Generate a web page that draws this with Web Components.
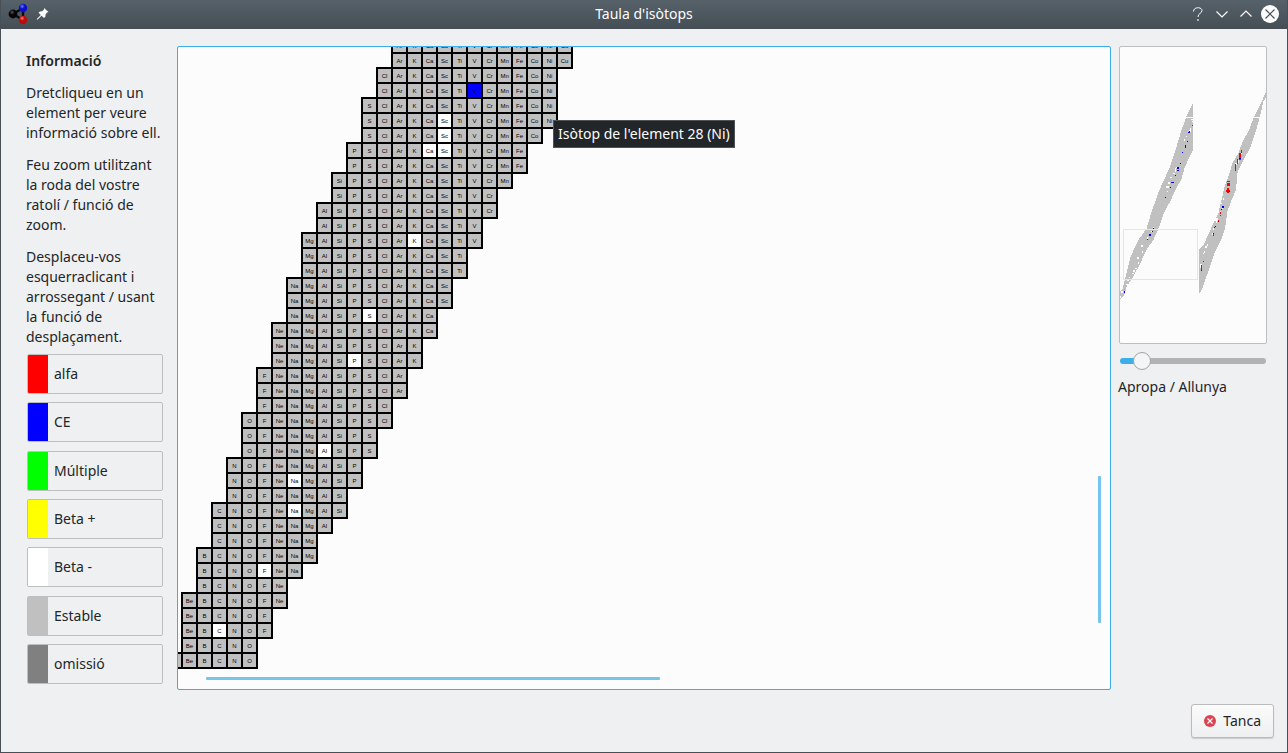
<!DOCTYPE html>
<html lang="ca">
<head>
<meta charset="utf-8">
<title>Taula d'isòtops</title>
<style>
  html, body { margin: 0; height: 100%; }
  body { font: 14px/20px "Noto Sans", sans-serif; color: #232629; background: #eff0f1; }
</style>
</head>
<body>
<isotope-window></isotope-window>

<template id="title-bar">
  <style>
    :host { display: grid; grid-template-columns: 1fr auto 1fr; align-items: center; height: 29px; box-sizing: border-box;
      padding: 0 7px 1px; background: linear-gradient(#566169, #454e55); color: #fcfcfc; }
    h1 { font: inherit; margin: 0; }
    .left, .right { display: flex; align-items: center; }
    .left { gap: 8px; }
    .right { justify-content: flex-end; gap: 4px; }
    button { all: unset; display: flex; width: 20px; height: 20px; }
    svg { display: block; }
  </style>
  <div class="left">
    <svg width="20" height="22" viewBox="0 0 20 22" aria-hidden="true">
      <defs>
        <radialGradient id="k" cx=".4" cy=".3"><stop offset="0" stop-color="#555"/><stop offset=".6" stop-color="#050505"/></radialGradient>
        <radialGradient id="b" cx=".4" cy=".3"><stop offset="0" stop-color="#7480ff"/><stop offset=".6" stop-color="#0a10c8"/></radialGradient>
        <radialGradient id="r" cx=".4" cy=".3"><stop offset="0" stop-color="#ff7b70"/><stop offset=".6" stop-color="#c00a0a"/></radialGradient>
      </defs>
      <path d="M5 11 15 5V17Z" fill="none" stroke="#0a0a0a" stroke-width="2.4"/>
      <circle cx="5" cy="11" r="4.4" fill="url(#k)"/>
      <circle cx="15" cy="5" r="4.2" fill="url(#b)"/>
      <circle cx="15" cy="17" r="4.2" fill="url(#r)"/>
    </svg>
    <button aria-label="Fixa"><svg width="14" height="20" viewBox="0 0 14 20"><path d="M8 4 12.500 8 11 8.500 9.500 10.500 9.500 12.500 8 14 5.500 11.800 1.500 15.800 .8 15 4.800 11 2.500 8.700 4 7.500 6.200 7.300 8 5.500Z" fill="#fcfcfc"/></svg></button>
  </div>
  <h1>Taula d'isòtops</h1>
  <div class="right">
    <button aria-label="Ajuda"><svg width="20" height="20" viewBox="0 0 20 20" fill="none" stroke="#fcfcfc"><path d="M5.500 7.500C5.500 2.500 14 2.800 14 6.500 14 9.500 10 9.200 10 13"/><path d="M10 15v2" stroke-width="1.600" opacity=".7"/></svg></button>
    <button aria-label="Minimitza"><svg width="20" height="20" viewBox="0 0 20 20" fill="none" stroke="#fcfcfc" stroke-width="1.200"><path d="M4.500 7.500 10 13 15.500 7.500"/></svg></button>
    <button aria-label="Maximitza"><svg width="20" height="20" viewBox="0 0 20 20" fill="none" stroke="#fcfcfc" stroke-width="1.200"><path d="M4.500 12.500 10 7 15.500 12.500"/></svg></button>
    <button aria-label="Tanca la finestra"><svg width="20" height="20" viewBox="0 0 20 20"><circle cx="10" cy="10" r="9" fill="#fcfcfc"/><path d="M5.500 5.500l9 9m0-9l-9 9" stroke="#475057" stroke-width="1.200"/></svg></button>
  </div>
</template>

<template id="info-panel">
  <style>
    :host { display: flex; flex-direction: column; box-sizing: border-box; padding: 5px 0 6px; }
    h2 { font: inherit; font-weight: 600; margin: 0; }
    p { margin: 12px 0 0; }
    ul { list-style: none; margin: 7px 0 0 1px; padding: 0; flex: 1; display: flex; flex-direction: column; justify-content: space-between; }
  </style>
  <h2>Informació</h2>
  <p>Dretcliqueu en un element per veure informació sobre ell.</p>
  <p>Feu zoom utilitzant la roda del vostre ratolí / funció de zoom.</p>
  <p>Desplaceu-vos esquerraclicant i arrossegant / usant la funció de desplaçament.</p>
  <ul>
    <li><legend-entry style="--swatch:#f00">alfa</legend-entry></li>
    <li><legend-entry style="--swatch:#00f">CE</legend-entry></li>
    <li><legend-entry style="--swatch:#0f0">Múltiple</legend-entry></li>
    <li><legend-entry style="--swatch:#ff0">Beta +</legend-entry></li>
    <li><legend-entry style="--swatch:#fff">Beta -</legend-entry></li>
    <li><legend-entry style="--swatch:#c0c0c0">Estable</legend-entry></li>
    <li><legend-entry style="--swatch:#808080">omissió</legend-entry></li>
  </ul>
</template>

<template id="legend-entry">
  <style>
    :host { display: flex; align-items: center; gap: 6px; height: 40px; box-sizing: border-box; border: 1px solid #bcbebf; border-radius: 2px; overflow: hidden; }
    i { align-self: stretch; width: 20px; background: var(--swatch); }
  </style>
  <i></i><span><slot></slot></span>
</template>

<template id="isotope-chart">
  <style>
    :host { display: block; position: relative; box-sizing: border-box; min-height: 644px; border: 1px solid #3daee9; border-radius: 2px; background: #fcfcfc; }
    .view { position: absolute; inset: 0; overflow: hidden; }
    table { border-collapse: collapse; table-layout: fixed; width: 407px; margin: -10px 0 0 -12px; font: 6px/11px "Liberation Sans", sans-serif; color: #000; text-align: center; }
    col { width: 15px; }
    tr { height: 15px; }
    td { padding: 0; white-space: nowrap; }
    .cell { padding-top: 2px; border: 2px solid #000; background: #c0c0c0; }
    .cell.beta { background: #fff; }
    .cell.ce { background: #00f; }
    .bar { position: absolute; background: #77c4ec; border-radius: 1px; }
    .v { width: 3px; right: 9px; bottom: 66px; height: 147px; }
    .h { height: 3px; bottom: 9px; left: 3%; width: 454px; }
    .tip { position: absolute; left: 375px; top: 73px; padding: 3px 4px; border: 1px solid #4d5356; background: #232629; color: #fcfcfc; white-space: nowrap; }
  </style>
  <div class="view"><table aria-label="Isòtops"></table></div>
  <div class="bar v"></div><div class="bar h"></div>
  <div class="tip" role="tooltip">Isòtop de l'element 28 (Ni)</div>
</template>

<template id="chart-navigator">
  <style>
    :host { display: flex; flex-direction: column; }
    .map { box-sizing: border-box; border: 1px solid #bcbebf; border-radius: 2px; background: #fcfcfc; overflow: hidden; }
    svg { display: block; width: 100%; }
    input { appearance: none; -webkit-appearance: none; display: block; width: auto; margin: 8px 1px 7px; height: 18px; background: none; }
    input::-webkit-slider-runnable-track { height: 6px; border-radius: 3px; background: linear-gradient(to right, #3daee9 15%, #b1b3b4 15%); }
    input::-webkit-slider-thumb { -webkit-appearance: none; box-sizing: border-box; width: 18px; height: 18px; margin-top: -6px; border: 1px solid #a2a4a6; border-radius: 50%; background: #f4f5f5; }
    label { margin-left: -1px; white-space: nowrap; }
  </style>
  <div class="map">
    <svg viewBox="0 0 438 888" shape-rendering="crispEdges" role="img" aria-label="Mapa">
      <g fill="#c0c0c0">
        <path d="M217 171 199 209 183 254 165 314 150 359 130 404 118 429 95 494 80 544 55 579 32 629 18 684 8 724 0 734 0 757 12 747 20 719 35 697 60 651 80 607 100 579 120 534 130 501 150 464 167 429 185 394 195 359 219 309 219 171Z"/>
        <path d="M438 136 422 169 402 209 385 254 370 279 355 319 337 349 327 384 315 414 307 449 295 499 282 524 267 559 250 594 238 607 238 739 245 729 270 659 285 614 303 579 315 544 322 494 335 459 348 429 353 374 370 339 390 304 410 244 420 209 430 164 438 152Z"/>
      </g>
      <g id="dots"></g>
      <rect x="11" y="548" width="222" height="150" fill="none" stroke="#f5dedd" stroke-width="3"/>
    </svg>
  </div>
  <input type="range" id="zoom" min="0" max="100" value="10">
  <label for="zoom">Apropa / Allunya</label>
</template>

<template id="isotope-window">
  <style>
    :host { display: flex; flex-direction: column; min-height: 100vh; box-sizing: border-box; border: solid #475057; border-width: 0 1px 1px; background: #eff0f1; }
    main { flex: 1; display: grid; grid-template-columns: 137px 1fr 148px; padding: 17px 20px 0 25px; }
    isotope-chart { margin: 0 8px 0 14px; }
    footer { display: flex; justify-content: flex-end; padding: 14px 13px 14px; }
    button { display: flex; align-items: center; gap: 6px; height: 34px; box-sizing: border-box; margin: 0; padding: 0 12px 0 11px; font: inherit; color: inherit;
      border: 1px solid #b9bbbd; border-radius: 3px; background: linear-gradient(#fbfbfb, #eeeff0); box-shadow: 0 1px 1px #c9cbcc; }
  </style>
  <title-bar></title-bar>
  <main><info-panel></info-panel><isotope-chart></isotope-chart><chart-navigator></chart-navigator></main>
  <footer><button><svg width="14" height="14" viewBox="0 0 14 14" aria-hidden="true"><circle cx="7" cy="7" r="6" fill="#da4453"/><path d="M4.500 4.500l5 5m0-5l-5 5" stroke="#fff" stroke-width="1.200"/></svg>Tanca</button></footer>
</template>

<script>
const SYMBOLS = ['', 'Be', 'B', 'C', 'N', 'O', 'F', 'Ne', 'Na', 'Mg', 'Al', 'Si', 'P', 'S', 'Cl', 'Ar', 'K', 'Ca', 'Sc', 'Ti', 'V', 'Cr', 'Mn', 'Fe', 'Co', 'Ni', 'Cu'];
const FIRST = 3;
// Each row: first atomic number, last atomic number, then the decays of single cells.
const ROWS = [[18,29],[18,29],[17,28],[17,28,{23:'ce'}],[16,28],[16,28,{21:'beta'}],[16,27,{21:'beta'}],[15,26,{20:'beta',21:'beta'}],
  [15,26],[14,25],[14,24],[13,24],[13,23],[12,23,{19:'beta'}],[12,22],[12,22],[11,21],[11,21],[11,20,{16:'beta'}],[10,20],[10,19],
  [10,19,{15:'beta'}],[9,18],[9,18],[9,17],[8,17],[8,16],[8,16,{13:'beta'}],[7,15],[7,15,{11:'beta'}],[7,14],[6,14,{11:'beta'}],
  [6,13],[6,12],[5,12],[5,11,{9:'beta'}],[5,10],[4,10],[4,9],[4,9,{6:'beta'}],[4,8],[3,8]];
// Overview marks: x, y, width, height.
const DOTS = {
  '#fcfcfc': [[196,210,26,3],[400,210,22,3],[213,215,6,3],[216,222,3,3],[210,243,3,12],[207,249,3,9],[198,267,3,3],[192,276,3,6],[168,359,9,3],[165,363,3,12],
    [160,378,6,3],[150,390,6,3],[144,405,6,6],[138,417,9,6],[140,432,4,3],[98,540,3,6],[94,552,4,4],[82,570,3,6],[63,594,6,6],[66,612,3,6],[51,630,6,6],[53,645,4,6],
    [45,663,6,3],[39,669,6,6],[36,678,6,3],[27,690,4,3],[22,699,6,3],[18,711,6,3],[3,732,6,6],[0,747,3,6],
    [363,315,3,6],[357,324,3,12],[354,339,3,9],[346,349,6,6],[309,453,3,6],[303,468,3,3],[306,480,3,6],[300,492,3,6],[285,513,9,9],[288,522,3,6],[279,543,3,6],[276,558,3,6],[261,591,3,6],[255,597,6,6],[252,612,3,6],[249,618,3,3],[239,651,6,12]],
  '#f00': [[216,234,3,3],[363,309,3,9],[357,318,6,21],[351,336,3,15],[346,350,3,21],[321,402,9,3],[321,408,9,9],[321,423,6,15],[318,429,12,5],[300,495,3,6],[300,504,3,3],[295,519,3,3],[279,561,3,6],[249,642,3,3],[243,654,3,15]],
  '#00f': [[207,252,3,3],[204,255,6,3],[201,282,3,3],[195,294,3,9],[186,315,3,3],[180,348,3,3],[171,360,6,6],[171,369,6,3],[165,384,3,3],[153,405,8,3],[150,420,3,3],[135,450,3,3],[99,543,3,3],[96,552,3,3],[87,561,6,6],[81,576,3,3],[12,732,3,6],
    [357,333,6,3],[327,432,3,3],[306,477,6,6],[303,486,3,3],[295,522,3,3],[285,537,3,3],[282,540,3,3],[279,558,3,3],[243,669,3,3]]
};

class Templated extends HTMLElement {
  constructor() {
    super();
    const template = document.getElementById(this.localName);
    this.attachShadow({ mode: 'open' }).append(template.content.cloneNode(true));
  }
}

class IsotopeChart extends Templated {
  constructor() {
    super();
    const blank = n => n > 0 ? `<td colspan="${n}"></td>` : '';
    const last = FIRST + SYMBOLS.length - 1;
    this.shadowRoot.querySelector('table').innerHTML =
      '<colgroup>' + '<col>'.repeat(SYMBOLS.length) + '</colgroup><tbody>' +
      ROWS.map(([from, to, decays = {}]) => {
        let cells = '';
        for (let z = from; z <= to; z++) cells += `<td class="cell ${decays[z] || ''}">${SYMBOLS[z - FIRST]}</td>`;
        return `<tr>${blank(from - FIRST)}${cells}${blank(last - to)}</tr>`;
      }).join('') + '</tbody>';
  }
}

class ChartNavigator extends Templated {
  constructor() {
    super();
    this.shadowRoot.getElementById('dots').innerHTML = Object.entries(DOTS).map(([fill, marks]) =>
      `<path fill="${fill}" d="${marks.map(([x, y, w, h]) => `M${x} ${y}h${w}v${h}h-${w}z`).join('')}"/>`).join('');
  }
}

customElements.define('legend-entry', class extends Templated {});
customElements.define('title-bar', class extends Templated {});
customElements.define('info-panel', class extends Templated {});
customElements.define('isotope-chart', IsotopeChart);
customElements.define('chart-navigator', ChartNavigator);
customElements.define('isotope-window', class extends Templated {});
</script>
</body>
</html>
